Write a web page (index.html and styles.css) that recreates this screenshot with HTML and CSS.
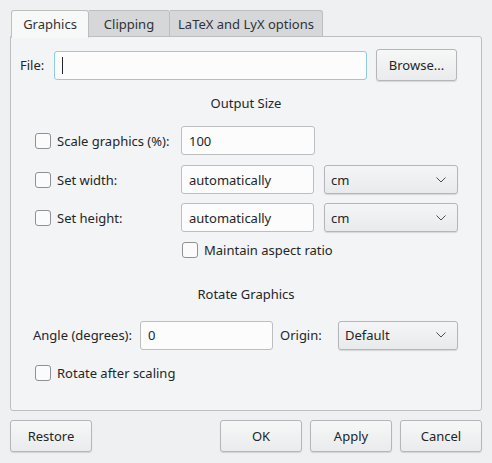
FILE: index.html
```html
<!DOCTYPE html>
<html>
<head>
<meta charset="utf-8">
<link rel="stylesheet" href="styles.css">
</head>
<body>
<div class="dialog">
  <div class="tabs">
    <div class="tab active">Graphics</div>
    <div class="tab t2">Clipping</div>
    <div class="tab t3">LaTeX and LyX options</div>
  </div>
  <div class="panel">
    <div class="file-row">
      <span class="file-label">File:</span>
      <div class="input file-input focus"><span class="caret"></span></div>
      <div class="button browse">Browse...</div>
    </div>
    <div class="heading h1">Output Size</div>
    <div class="grid-row r-scale">
      <div class="check-cell"><span class="check"></span><span>Scale graphics (%):</span></div>
      <div class="input w134">100</div>
    </div>
    <div class="grid-row r-width">
      <div class="check-cell"><span class="check"></span><span>Set width:</span></div>
      <div class="input w133">automatically</div>
      <div class="combo w134"><span>cm</span><svg class="chev" width="10" height="6" viewBox="0 0 10 6"><path d="M0.5 0.5 L5 5 L9.5 0.5" fill="none" stroke="#4d4f52" stroke-width="1"/></svg></div>
    </div>
    <div class="grid-row r-height">
      <div class="check-cell"><span class="check"></span><span>Set height:</span></div>
      <div class="input w133">automatically</div>
      <div class="combo w134"><span>cm</span><svg class="chev" width="10" height="6" viewBox="0 0 10 6"><path d="M0.5 0.5 L5 5 L9.5 0.5" fill="none" stroke="#4d4f52" stroke-width="1"/></svg></div>
    </div>
    <div class="aspect-row">
      <span class="check"></span><span>Maintain aspect ratio</span>
    </div>
    <div class="heading h2">Rotate Graphics</div>
    <div class="angle-row">
      <span class="angle-label">Angle (degrees):</span>
      <div class="input w133">0</div>
      <span class="origin-label">Origin:</span>
      <div class="combo w120"><span>Default</span><svg class="chev" width="10" height="6" viewBox="0 0 10 6"><path d="M0.5 0.5 L5 5 L9.5 0.5" fill="none" stroke="#4d4f52" stroke-width="1"/></svg></div>
    </div>
    <div class="rotate-row">
      <span class="check"></span><span>Rotate after scaling</span>
    </div>
  </div>
  <div class="buttons">
    <div class="button bw">Restore</div>
    <div class="spacer"></div>
    <div class="button bw">OK</div>
    <div class="button bw">Apply</div>
    <div class="button bw">Cancel</div>
  </div>
</div>
</body>
</html>
```

FILE: styles.css
```css
* { box-sizing: border-box; }
html, body {
  margin: 0;
  padding: 0;
  background: #eff0f1;
  width: 492px;
  height: 463px;
  overflow: hidden;
}
body {
  font-family: "Noto Sans", "DejaVu Sans", sans-serif;
  font-size: 13px;
  color: #232629;
}
.dialog {
  padding: 10px 10px 0 10px;
}
.tabs {
  display: flex;
  height: 27px;
  padding-left: 1px;
  position: relative;
  z-index: 1;
}
.tab {
  height: 27px;
  display: flex;
  align-items: center;
  justify-content: center;
  background: #d6d7d8;
  border: 1px solid #bcbec0;
  border-left: none;
  border-bottom: 1px solid #bcbec0;
  color: #2f3337;
  border-radius: 0 3px 0 0;
}
.tab.active {
  width: 78px;
  background: #f7f8f8;
  border-left: 1px solid #bcbec0;
  border-bottom-color: #f7f8f8;
  border-radius: 3px 3px 0 0;
  height: 28px;
}
.tab.t2 { width: 81px; }
.tab.t3 { width: 153px; }
.panel {
  width: 472px;
  height: 375px;
  margin-top: -1px;
  border: 1px solid #bcbec0;
  border-radius: 0 3px 3px 3px;
  background: #f3f4f5;
  padding-top: 12px;
}
.file-row {
  display: flex;
  align-items: center;
  height: 32px;
}
.file-label {
  margin-left: 9px;
  width: 34px;
}
.input {
  height: 29px;
  background: #fcfcfc;
  border: 1px solid #bcbec0;
  border-radius: 3px;
  display: flex;
  align-items: center;
  padding-left: 7px;
}
.file-input {
  width: 313px;
}
.input.focus {
  border-color: #8dcbe6;
}
.caret {
  width: 1px;
  height: 17px;
  background: #232629;
}
.button {
  height: 32px;
  display: flex;
  align-items: center;
  justify-content: center;
  border: 1px solid #b4b6b8;
  border-radius: 3px;
  background: linear-gradient(#f6f7f7, #eaebec);
  box-shadow: 0 1px 1px rgba(0,0,0,0.12);
}
.browse {
  width: 81px;
  margin-left: 9px;
}
.heading {
  text-align: center;
  height: 18px;
  line-height: 18px;
}
.h1 { margin-top: 13px; }
.grid-row {
  display: grid;
  grid-template-columns: 136px 133px 134px;
  column-gap: 10px;
  padding-left: 24px;
  align-items: center;
  height: 29px;
}
.r-scale { margin-top: 14px; }
.r-width { margin-top: 10px; }
.r-height { margin-top: 9px; }
.check-cell {
  display: flex;
  align-items: center;
  white-space: nowrap;
}
.check {
  width: 16px;
  height: 16px;
  border: 1px solid #8f9193;
  border-radius: 3px;
  background: #fbfbfb;
  margin-right: 6px;
  flex: none;
}
.w134 { width: 134px; }
.w133 { width: 133px; }
.w120 { width: 120px; }
.combo {
  height: 29px;
  display: flex;
  align-items: center;
  justify-content: space-between;
  padding: 0 11px 0 6px;
  border: 1px solid #b4b6b8;
  border-radius: 3px;
  background: linear-gradient(#f4f5f6, #e9eaeb);
  box-shadow: 0 1px 1px rgba(0,0,0,0.12);
}
.chev { display: block; }
.aspect-row {
  display: flex;
  align-items: center;
  padding-left: 171px;
  margin-top: 10px;
  height: 16px;
}
.h2 { margin-top: 27px; }
.angle-row {
  display: flex;
  align-items: center;
  height: 30px;
  margin-top: 17px;
}
.angle-label {
  margin-left: 22px;
  width: 107px;
}
.origin-label {
  margin-left: 7px;
  width: 58px;
}
.rotate-row {
  display: flex;
  align-items: center;
  padding-left: 24px;
  margin-top: 15px;
  height: 16px;
}
.buttons {
  display: flex;
  margin-top: 9px;
  gap: 8px;
}
.bw { width: 82px; }
.spacer { flex: 1; }
```
